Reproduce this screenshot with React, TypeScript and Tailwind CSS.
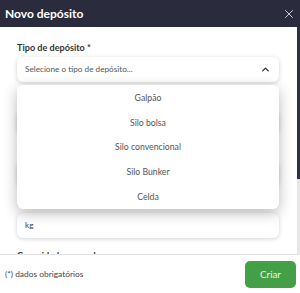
import { X, ChevronUp } from "lucide-react";

const OPTIONS = ["Galpão", "Silo bolsa", "Silo convencional", "Silo Bunker", "Celda"];

function Field({ label, placeholder }: { label: string; placeholder: string }) {
  return (
    <div className="flex flex-col">
      <label className="h-[14px] leading-[14px] text-[9.1px] font-bold text-[#333] mb-[2px]">{label}</label>
      <div className="h-[25px] rounded-[6px] bg-white shadow-[0_1px_4px_rgba(0,0,0,0.18)] flex items-center px-[8px] text-[8.2px] text-[#444]">
        {placeholder}
      </div>
    </div>
  );
}

export default function App() {
  return (
    <div className="w-[300px] h-[293px] flex flex-col bg-white overflow-hidden" style={{ fontFamily: 'Lato, "Open Sans", sans-serif' }}>
      {/* Header */}
      <div className="h-[27px] bg-[#2a2b3c] flex items-center justify-between pl-[5px] pr-[4px]">
        <span className="text-white text-[12px] font-bold">Novo depósito</span>
        <X size={14} strokeWidth={1.6} className="text-[#d6d6de]" />
      </div>
      {/* Body */}
      <div className="flex-1 flex min-h-0">
        <div className="flex-1 relative overflow-hidden pt-[14px] pl-[17px] pr-[18px]">
          <div className="flex flex-col gap-[11px]">
            <div className="relative flex flex-col">
              <label className="h-[14px] leading-[14px] text-[9.1px] font-bold text-[#333] mb-[2px]">Tipo de depósito *</label>
              <div className="h-[25px] rounded-[6px] bg-white shadow-[0_1px_4px_rgba(0,0,0,0.18)] flex items-center justify-between px-[8px] text-[8.2px] text-[#555]">
                <span>Selecione o tipo de depósito...</span>
                <ChevronUp size={11} strokeWidth={3} className="text-[#333]" />
              </div>
              {/* dropdown */}
              <div className="absolute left-0 right-0 top-[44px] z-10 h-[124px] rounded-[6px] bg-white shadow-[0_4px_14px_rgba(0,0,0,0.28)] flex flex-col">
                {OPTIONS.map((o) => (
                  <div key={o} className="flex-1 flex items-center justify-center text-[8.7px] text-[#555]">
                    {o}
                  </div>
                ))}
              </div>
            </div>
            <Field label="Nome *" placeholder="Digite o nome..." />
            <Field label="Capacidade *" placeholder="0" />
            <Field label="Unidade *" placeholder="kg" />
            <label className="h-[14px] leading-[14px] text-[9.1px] font-bold text-[#333]">Capacidade ocupada</label>
          </div>
        </div>
        {/* scrollbar */}
        <div className="w-[3px] flex flex-col bg-[#e6e6e6]">
          <div className="h-[152px] bg-[#2f3042]" />
        </div>
      </div>
      {/* Footer */}
      <div className="h-[39px] border-t border-[#e3e3e3] flex items-center justify-between pl-[5px] pr-[4px]">
        <span className="text-[8.4px] text-[#444]">(*) dados obrigatórios</span>
        <button className="w-[51px] h-[27px] rounded-[5px] bg-[#43a047] text-[#e8f5e9] text-[9.8px]">Criar</button>
      </div>
    </div>
  );
}
